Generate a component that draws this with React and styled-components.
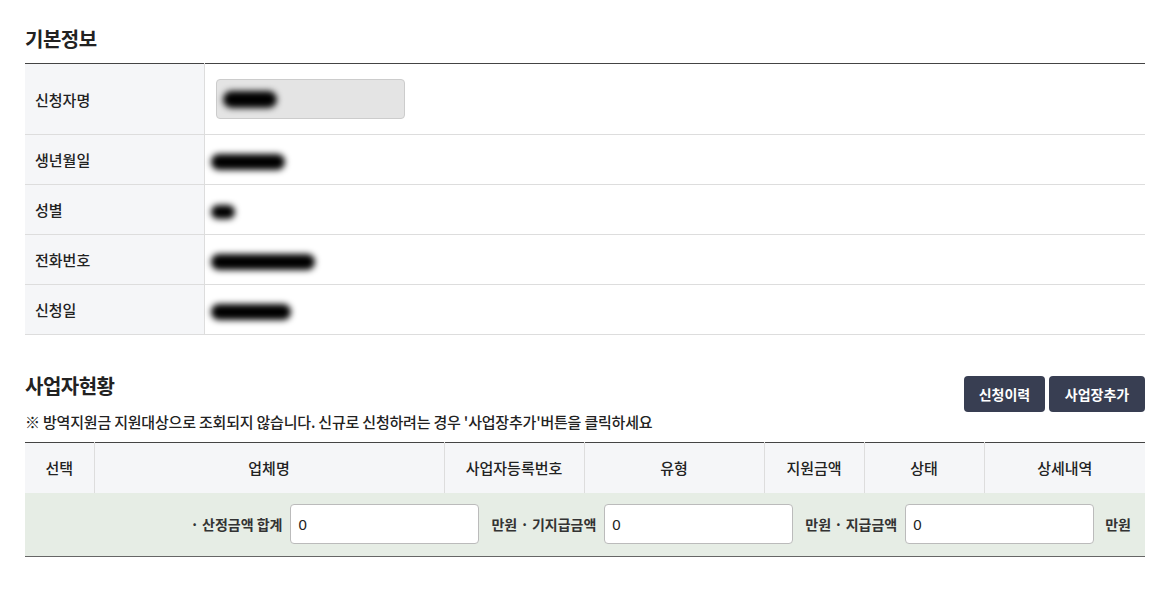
import React from "react";
import styled, { createGlobalStyle } from "styled-components";

const Global = createGlobalStyle`
  html, body { margin: 0; padding: 0; background: #fff; }
  body { font-family: "Noto Sans CJK KR", "Noto Sans", sans-serif; color: #222; }
  * { box-sizing: border-box; }
`;

const Page = styled.div`
  width: 1173px;
  padding: 25px 28px 0 25px;
`;

const Section = styled.section`
  & + & { margin-top: 37px; }
`;

const Title = styled.h2`
  margin: 0;
  font-size: 20px;
  line-height: 28px;
  font-weight: 700;
  color: #222;
  letter-spacing: -0.5px;
`;

const TitleBlock = styled.div`
  margin-bottom: 10px;
`;

const InfoTable = styled.table`
  width: 1120px;
  border-collapse: collapse;
  border-top: 1px solid #444;
  border-bottom: 1px solid #ddd;
`;

const Th = styled.th`
  width: 179px;
  background: #f5f6f8;
  border-right: 1px solid #ddd;
  border-bottom: 1px solid #ddd;
  text-align: left;
  padding: 0 0 0 10px;
  font-size: 15px;
  font-weight: 500;
  color: #222;
  height: ${p => p.$h || 50}px;
`;

const Td = styled.td`
  border-bottom: 1px solid #ddd;
  padding: 0 0 0 ${p => p.$pl || 6}px;
  height: ${p => p.$h || 50}px;
`;

const ReadInput = styled.div`
  width: 189px;
  height: 40px;
  background: #e4e4e4;
  border: 1px solid #ccc;
  border-radius: 4px;
  display: flex;
  align-items: center;
  padding-left: 6px;
`;

const Mask = styled.span`
  display: inline-block;
  vertical-align: middle;
  width: ${p => p.$w}px;
  height: ${p => p.$hh || 16}px;
  background: #000;
  border-radius: 10px;
  filter: blur(3px);
`;

const Head = styled.div`
  display: flex;
  justify-content: space-between;
  align-items: flex-start;
  margin-bottom: 9px;
`;

const Note = styled.p`
  margin: 11px 0 0;
  font-size: 15px;
  line-height: 22px;
  font-weight: 500;
  color: #222;
  letter-spacing: -0.2px;
`;

const Buttons = styled.div`
  display: flex;
  gap: 4px;
  margin-top: 4px;
`;

const Button = styled.button`
  height: 36px;
  width: ${p => p.$w}px;
  background: #383e52;
  color: #fff;
  border: none;
  border-radius: 4px;
  font-family: inherit;
  font-size: 14px;
  font-weight: 700;
  cursor: pointer;
`;

const ListTable = styled.table`
  width: 1120px;
  border-collapse: collapse;
  border-top: 1px solid #444;
  border-bottom: 1px solid #666;
`;

const HeadCell = styled.th`
  width: ${p => p.$w}px;
  height: 50px;
  background: #f5f6f8;
  border-right: 1px solid #ddd;
  font-size: 15px;
  font-weight: 500;
  color: #222;
  text-align: center;
  &:last-child { border-right: none; }
`;

const SumCell = styled.td`
  height: 64px;
  background: #e6ede5;
  padding: 0 14px 0 0;
`;

const SumRow = styled.div`
  display: flex;
  justify-content: flex-end;
  align-items: center;
  gap: 8px;
  font-size: 14px;
  font-weight: 700;
  color: #333;
`;

const Unit = styled.span`
  margin-left: ${p => p.$ml ?? 4}px;
  white-space: nowrap;
`;

const AmountInput = styled.input`
  width: 189px;
  height: 40px;
  border: 1px solid #bbb;
  border-radius: 4px;
  background: #fff;
  padding: 0 7px;
  font-family: "Liberation Sans", Arial, sans-serif;
  font-size: 15px;
  color: #222;
`;

const infoRows = [
  { label: "생년월일", w: 74 },
  { label: "성별", w: 24 },
  { label: "전화번호", w: 104 },
  { label: "신청일", w: 80 },
];

const cols = [
  ["선택", 69], ["업체명", 350], ["사업자등록번호", 140], ["유형", 180],
  ["지원금액", 100], ["상태", 120], ["상세내역", 161],
];

export default function App() {
  return (
    <Page>
      <Global />
      <Section>
        <TitleBlock><Title>기본정보</Title></TitleBlock>
        <InfoTable>
          <tbody>
            <tr>
              <Th $h={71}>신청자명</Th>
              <Td $h={71} $pl={11}>
                <ReadInput><Mask $w={54} $hh={17} /></ReadInput>
              </Td>
            </tr>
            {infoRows.map(r => (
              <tr key={r.label}>
                <Th>{r.label}</Th>
                <Td><Mask $w={r.w} $hh={r.w < 30 ? 14 : 16} /></Td>
              </tr>
            ))}
          </tbody>
        </InfoTable>
      </Section>

      <Section>
        <Head>
          <div>
            <Title>사업자현황</Title>
            <Note>※ 방역지원금 지원대상으로 조회되지 않습니다. 신규로 신청하려는 경우 '사업장추가'버튼을 클릭하세요</Note>
          </div>
          <Buttons>
            <Button $w={81}>신청이력</Button>
            <Button $w={96}>사업장추가</Button>
          </Buttons>
        </Head>
        <ListTable>
          <thead>
            <tr>
              {cols.map(([t, w]) => <HeadCell key={t} $w={w}>{t}</HeadCell>)}
            </tr>
          </thead>
          <tbody>
            <tr>
              <SumCell colSpan={7}>
                <SumRow>
                  <Unit $ml={0}>· 산정금액 합계</Unit>
                  <AmountInput defaultValue="0" />
                  <Unit>만원 · 기지급금액</Unit>
                  <AmountInput defaultValue="0" />
                  <Unit>만원 · 지급금액</Unit>
                  <AmountInput defaultValue="0" />
                  <Unit $ml={3}>만원</Unit>
                </SumRow>
              </SumCell>
            </tr>
          </tbody>
        </ListTable>
      </Section>
    </Page>
  );
}
